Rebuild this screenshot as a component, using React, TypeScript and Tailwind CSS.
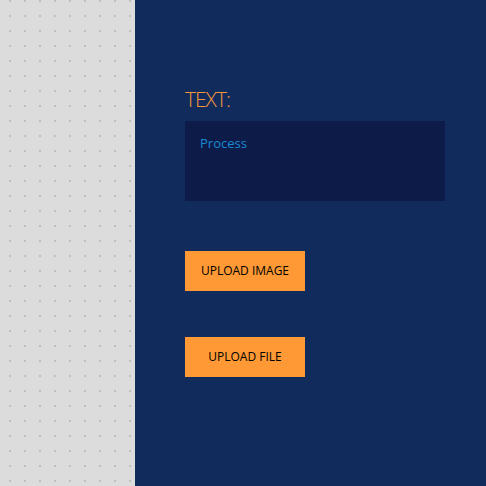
import React from "react";

export default function App() {
  return (
    <div className="flex h-[486px] w-[486px] overflow-hidden" style={{ fontFamily: '"Open Sans", "DejaVu Sans", sans-serif' }}>
      <div className="w-[135px] h-full bg-[#dcdcdc] shrink-0">
        <svg width="135" height="486" className="block">
          <defs>
            <pattern id="dots" x="9" y="0" width="15" height="15" patternUnits="userSpaceOnUse">
              <rect x="0" y="0" width="2" height="2" fill="#bfbfbf" />
            </pattern>
          </defs>
          <rect width="135" height="486" fill="url(#dots)" />
        </svg>
      </div>
      <div className="flex-1 h-full bg-[#112b5c] pl-[50px] pt-[86px]">
        <div className="text-[21px] leading-[26px] font-light text-[#f7953a] tracking-[-1px]">TEXT:</div>
        <div className="mt-[9px] w-[260px] h-[80px] bg-[#0d1b49] px-[15px] pt-[14px]">
          <div className="text-[13px] leading-[16px] font-normal text-[#1a8ad4]">Process</div>
        </div>
        <div className="mt-[50px] w-[120px] h-[40px] bg-[#fe9935] flex items-center justify-center text-[12px] font-normal text-black">UPLOAD IMAGE</div>
        <div className="mt-[46px] w-[120px] h-[40px] bg-[#fe9935] flex items-center justify-center text-[12px] font-normal text-black">UPLOAD FILE</div>
      </div>
    </div>
  );
}
